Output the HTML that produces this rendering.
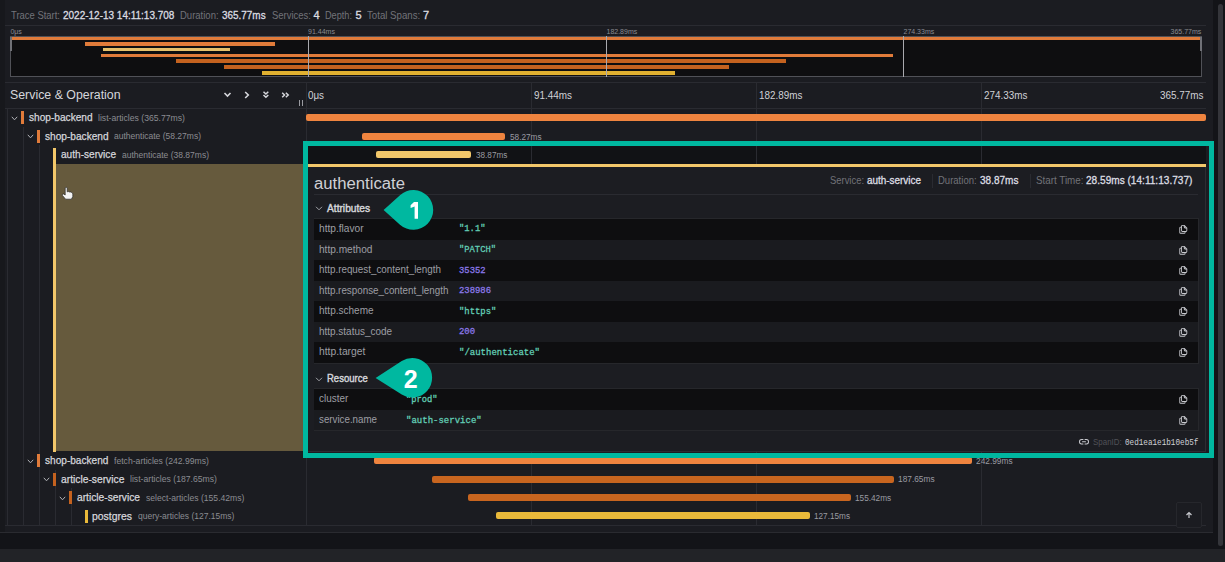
<!DOCTYPE html>
<html><head><meta charset="utf-8">
<style>
*{margin:0;padding:0;box-sizing:border-box}
html,body{width:1225px;height:562px;overflow:hidden;background:#131418;font-family:"Liberation Sans",sans-serif;color:#d0d1d6}
.a{position:absolute}
.t{position:absolute;white-space:nowrap;line-height:1}
.hl{position:absolute;height:1px;background:#2a2b31}
.vl{position:absolute;width:1px;background:#2a2b31}
.mm{position:absolute;height:3.8px}
.bar{position:absolute;height:7px;border-radius:2px}
.cb{position:absolute;width:3px;height:13px}
.chev{position:absolute;width:7px;height:5px}
.row{position:absolute;left:314px;width:884px;height:20.5px}
.copy{position:absolute;left:1179px;width:9px;height:10px}
</style></head><body>
<div class="a" style="left:0;top:0;width:1213px;height:533px;background:#1b1c21;border-bottom:1px solid #2a2b30"></div>
<div class="a" style="left:0;top:548.5px;width:1225px;height:14px;background:#222327"></div>
<div class="a" style="left:1218px;top:4px;width:5px;height:542px;border-radius:3px;background:#34353a"></div>

<div class="a" style="left:0;top:0;width:4.5px;height:532px;background:#17181c"></div>
<div class="hl" style="left:5px;top:25px;width:1201px"></div>

<!-- minimap -->
<div class="a" style="left:10px;top:36px;width:1192px;height:41px;background:#0e0e10;border:1px solid #505157"></div>
<div class="mm" style="left:12px;top:36.5px;width:1189px;background:#e07b3a"></div>
<div class="mm" style="left:84.6px;top:41.8px;width:190px;background:#e07b3a"></div>
<div class="mm" style="left:103px;top:47.6px;width:127px;background:#e5c06c"></div>
<div class="mm" style="left:100.6px;top:53.5px;width:792px;background:#e07b3a"></div>
<div class="mm" style="left:176.4px;top:59.3px;width:610px;background:#c4621f"></div>
<div class="mm" style="left:224px;top:65.1px;width:505px;background:#c4621f"></div>
<div class="mm" style="left:262px;top:71px;width:413px;background:#e0b030"></div>
<div class="a" style="left:308px;top:36px;width:1px;height:41px;background:#a9a9ae"></div>
<div class="a" style="left:606px;top:36px;width:1px;height:41px;background:#a9a9ae"></div>
<div class="a" style="left:903px;top:36px;width:1px;height:41px;background:#a9a9ae"></div>
<div class="a" style="left:10px;top:37px;width:2px;height:14px;background:#707177"></div>
<div class="a" style="left:1200px;top:37px;width:2px;height:14px;background:#707177"></div>

<!-- column header -->
<div class="hl" style="left:5px;top:82px;width:1201px"></div>
<div class="hl" style="left:5px;top:108px;width:1201px"></div>
<svg class="a" style="left:222px;top:90px" width="12" height="10" viewBox="0 0 12 10"><path d="M2.5 3 L5.5 6 L8.5 3" fill="none" stroke="#d6d7dc" stroke-width="1.6"/></svg>
<svg class="a" style="left:242px;top:90px" width="10" height="10" viewBox="0 0 10 10"><path d="M3.2 2 L6.3 5 L3.2 8" fill="none" stroke="#d6d7dc" stroke-width="1.6"/></svg>
<svg class="a" style="left:261px;top:89px" width="10" height="11" viewBox="0 0 10 11"><path d="M2.5 2.8 L4.9 5 L7.3 2.8 M2.5 6 L4.9 8.3 L7.3 6" fill="none" stroke="#d6d7dc" stroke-width="1.5"/></svg>
<svg class="a" style="left:280px;top:90px" width="11" height="10" viewBox="0 0 11 10"><path d="M2.2 2.8 L4.5 5 L2.2 7.2 M5.8 2.8 L8.2 5 L5.8 7.2" fill="none" stroke="#d6d7dc" stroke-width="1.5"/></svg>
<div class="a" style="left:299px;top:100px;width:1px;height:6px;background:#9a9ba1"></div>
<div class="a" style="left:302px;top:100px;width:1px;height:6px;background:#9a9ba1"></div>
<div class="vl" style="left:306px;top:82px;height:444px"></div>
<div class="vl" style="left:531px;top:82px;height:444px"></div>
<div class="vl" style="left:756px;top:82px;height:444px"></div>
<div class="vl" style="left:981px;top:82px;height:444px"></div>

<!-- indent guides -->
<div class="vl" style="left:7px;top:108px;height:418px"></div>
<div class="vl" style="left:23px;top:127px;height:399px"></div>
<div class="vl" style="left:39px;top:145px;height:381px"></div>
<div class="vl" style="left:55px;top:470px;height:56px"></div>
<div class="vl" style="left:71px;top:488px;height:38px"></div>
<div class="hl" style="left:5px;top:525px;width:1201px"></div>

<!-- row1 -->
<svg class="a chev" style="left:11px;top:115.5px" viewBox="0 0 7 5"><path d="M0.8 0.8 L3.5 3.8 L6.2 0.8" fill="none" stroke="#b0b1b6" stroke-width="1"/></svg>
<div class="cb" style="left:21px;top:111px;background:#e07b3a"></div>
<div class="bar" style="left:306px;top:114.2px;width:900px;background:#ef843f"></div>
<!-- row2 -->
<svg class="a chev" style="left:27px;top:134px" viewBox="0 0 7 5"><path d="M0.8 0.8 L3.5 3.8 L6.2 0.8" fill="none" stroke="#b0b1b6" stroke-width="1"/></svg>
<div class="cb" style="left:37px;top:130px;background:#e07b3a"></div>
<div class="bar" style="left:362px;top:132.7px;width:143px;background:#ef843f"></div>
<!-- row3 -->
<div class="a" style="left:53px;top:148px;width:3px;height:304px;background:#f2c76a"></div>
<div class="a" style="left:306px;top:145.5px;width:900px;height:18.5px;background:#111215"></div>
<div class="vl" style="left:531px;top:145.5px;height:18.5px"></div>
<div class="vl" style="left:756px;top:145.5px;height:18.5px"></div>
<div class="vl" style="left:981px;top:145.5px;height:18.5px"></div>
<div class="bar" style="left:376px;top:151.2px;width:95px;background:#f2c76a"></div>

<!-- detail left olive -->
<div class="a" style="left:56px;top:164px;width:250px;height:287px;background:#665a3d"></div>
<svg class="a" style="left:60px;top:186px" width="15" height="15" viewBox="0 0 15 15"><path d="M5.2 1.8 Q6.2 0.8 7.2 1.8 V5.8 Q8.5 5.2 9.5 6.0 Q10.8 5.6 11.8 6.6 Q12.8 6.8 12.8 8.2 V10.6 L11.4 13.2 H5.6 L2.4 9.4 Q1.8 8.0 3.4 7.9 L5.2 9.0 Z" fill="#f4f4f4" stroke="#2a2a2a" stroke-width="0.7"/></svg>
<!-- detail box -->
<div class="a" style="left:306px;top:164px;width:900px;height:287.5px;background:#1c1d22;border-right:1px solid #2c2d32;border-bottom:1px solid #2c2d32"></div>
<div class="a" style="left:306px;top:164px;width:900px;height:2.8px;background:#f2c76a"></div>
<div class="vl" style="left:932px;top:174px;height:14px"></div>
<div class="vl" style="left:1029.6px;top:174px;height:14px"></div>
<div class="hl" style="left:314px;top:194px;width:884px"></div>

<div class="a" style="left:313.5px;top:218px;width:885px;height:145.8px;border:1px solid #26272b"></div>
<div class="row" style="top:219.00px;height:20.55px;background:#0e0e10"></div>
<div class="row" style="top:239.55px;height:20.55px;background:#1a1b1f"></div>
<div class="row" style="top:260.10px;height:20.55px;background:#0e0e10"></div>
<div class="row" style="top:280.65px;height:20.55px;background:#1a1b1f"></div>
<div class="row" style="top:301.20px;height:20.55px;background:#0e0e10"></div>
<div class="row" style="top:321.75px;height:20.55px;background:#1a1b1f"></div>
<div class="row" style="top:342.30px;height:20.55px;background:#0e0e10"></div>
<svg class="a" style="left:315px;top:206px" width="8" height="5" viewBox="0 0 8 5"><path d="M1 0.8 L4 3.8 L7 0.8" fill="none" stroke="#a0a1a6" stroke-width="1"/></svg>

<div class="a" style="left:313.5px;top:388px;width:885px;height:43.1px;border:1px solid #26272b"></div>
<div class="row" style="top:389.00px;height:20.55px;background:#0e0e10"></div>
<div class="row" style="top:409.55px;height:20.55px;background:#1a1b1f"></div>
<svg class="a" style="left:315px;top:376.5px" width="8" height="5" viewBox="0 0 8 5"><path d="M1 0.8 L4 3.8 L7 0.8" fill="none" stroke="#a0a1a6" stroke-width="1"/></svg>
<svg class="a" style="left:1079px;top:439.4px" width="10" height="5.6" viewBox="2 7 20 10" preserveAspectRatio="none"><path d="M8,12a1,1,0,0,0,1,1h6a1,1,0,0,0,0-2H9A1,1,0,0,0,8,12Zm2,3H7A3,3,0,0,1,7,9h3a1,1,0,0,0,0-2H7A5,5,0,0,0,7,17h3a1,1,0,0,0,0-2Zm7-8H14a1,1,0,0,0,0,2h3a3,3,0,0,1,0,6H14a1,1,0,0,0,0,2h3A5,5,0,0,0,17,7Z" fill="#c8c9ce"/></svg>

<svg class="a" style="left:1177.8px;top:223.98px" width="10.6" height="10.6" viewBox="0 0 24 24"><path d="M21,8.94a1.31,1.31,0,0,0-.06-.27l0-.09a1.07,1.07,0,0,0-.19-.28h0l-6-6h0a1.07,1.07,0,0,0-.28-.19.32.32,0,0,0-.09,0A.88.88,0,0,0,14.05,2H10A3,3,0,0,0,7,5V6H6A3,3,0,0,0,3,9V19a3,3,0,0,0,3,3h8a3,3,0,0,0,3-3V18h1a3,3,0,0,0,3-3V9S21,9,21,8.94ZM15,5.41,17.59,8H16a1,1,0,0,1-1-1ZM15,19a1,1,0,0,1-1,1H6a1,1,0,0,1-1-1V9A1,1,0,0,1,6,8H7v7a3,3,0,0,0,3,3h5Zm4-4a1,1,0,0,1-1,1H10a1,1,0,0,1-1-1V5a1,1,0,0,1,1-1h3V7a3,3,0,0,0,3,3h3Z" fill="#c8c9ce"/></svg>
<svg class="a" style="left:1177.8px;top:244.53px" width="10.6" height="10.6" viewBox="0 0 24 24"><path d="M21,8.94a1.31,1.31,0,0,0-.06-.27l0-.09a1.07,1.07,0,0,0-.19-.28h0l-6-6h0a1.07,1.07,0,0,0-.28-.19.32.32,0,0,0-.09,0A.88.88,0,0,0,14.05,2H10A3,3,0,0,0,7,5V6H6A3,3,0,0,0,3,9V19a3,3,0,0,0,3,3h8a3,3,0,0,0,3-3V18h1a3,3,0,0,0,3-3V9S21,9,21,8.94ZM15,5.41,17.59,8H16a1,1,0,0,1-1-1ZM15,19a1,1,0,0,1-1,1H6a1,1,0,0,1-1-1V9A1,1,0,0,1,6,8H7v7a3,3,0,0,0,3,3h5Zm4-4a1,1,0,0,1-1,1H10a1,1,0,0,1-1-1V5a1,1,0,0,1,1-1h3V7a3,3,0,0,0,3,3h3Z" fill="#c8c9ce"/></svg>
<svg class="a" style="left:1177.8px;top:265.08px" width="10.6" height="10.6" viewBox="0 0 24 24"><path d="M21,8.94a1.31,1.31,0,0,0-.06-.27l0-.09a1.07,1.07,0,0,0-.19-.28h0l-6-6h0a1.07,1.07,0,0,0-.28-.19.32.32,0,0,0-.09,0A.88.88,0,0,0,14.05,2H10A3,3,0,0,0,7,5V6H6A3,3,0,0,0,3,9V19a3,3,0,0,0,3,3h8a3,3,0,0,0,3-3V18h1a3,3,0,0,0,3-3V9S21,9,21,8.94ZM15,5.41,17.59,8H16a1,1,0,0,1-1-1ZM15,19a1,1,0,0,1-1,1H6a1,1,0,0,1-1-1V9A1,1,0,0,1,6,8H7v7a3,3,0,0,0,3,3h5Zm4-4a1,1,0,0,1-1,1H10a1,1,0,0,1-1-1V5a1,1,0,0,1,1-1h3V7a3,3,0,0,0,3,3h3Z" fill="#c8c9ce"/></svg>
<svg class="a" style="left:1177.8px;top:285.63px" width="10.6" height="10.6" viewBox="0 0 24 24"><path d="M21,8.94a1.31,1.31,0,0,0-.06-.27l0-.09a1.07,1.07,0,0,0-.19-.28h0l-6-6h0a1.07,1.07,0,0,0-.28-.19.32.32,0,0,0-.09,0A.88.88,0,0,0,14.05,2H10A3,3,0,0,0,7,5V6H6A3,3,0,0,0,3,9V19a3,3,0,0,0,3,3h8a3,3,0,0,0,3-3V18h1a3,3,0,0,0,3-3V9S21,9,21,8.94ZM15,5.41,17.59,8H16a1,1,0,0,1-1-1ZM15,19a1,1,0,0,1-1,1H6a1,1,0,0,1-1-1V9A1,1,0,0,1,6,8H7v7a3,3,0,0,0,3,3h5Zm4-4a1,1,0,0,1-1,1H10a1,1,0,0,1-1-1V5a1,1,0,0,1,1-1h3V7a3,3,0,0,0,3,3h3Z" fill="#c8c9ce"/></svg>
<svg class="a" style="left:1177.8px;top:306.18px" width="10.6" height="10.6" viewBox="0 0 24 24"><path d="M21,8.94a1.31,1.31,0,0,0-.06-.27l0-.09a1.07,1.07,0,0,0-.19-.28h0l-6-6h0a1.07,1.07,0,0,0-.28-.19.32.32,0,0,0-.09,0A.88.88,0,0,0,14.05,2H10A3,3,0,0,0,7,5V6H6A3,3,0,0,0,3,9V19a3,3,0,0,0,3,3h8a3,3,0,0,0,3-3V18h1a3,3,0,0,0,3-3V9S21,9,21,8.94ZM15,5.41,17.59,8H16a1,1,0,0,1-1-1ZM15,19a1,1,0,0,1-1,1H6a1,1,0,0,1-1-1V9A1,1,0,0,1,6,8H7v7a3,3,0,0,0,3,3h5Zm4-4a1,1,0,0,1-1,1H10a1,1,0,0,1-1-1V5a1,1,0,0,1,1-1h3V7a3,3,0,0,0,3,3h3Z" fill="#c8c9ce"/></svg>
<svg class="a" style="left:1177.8px;top:326.73px" width="10.6" height="10.6" viewBox="0 0 24 24"><path d="M21,8.94a1.31,1.31,0,0,0-.06-.27l0-.09a1.07,1.07,0,0,0-.19-.28h0l-6-6h0a1.07,1.07,0,0,0-.28-.19.32.32,0,0,0-.09,0A.88.88,0,0,0,14.05,2H10A3,3,0,0,0,7,5V6H6A3,3,0,0,0,3,9V19a3,3,0,0,0,3,3h8a3,3,0,0,0,3-3V18h1a3,3,0,0,0,3-3V9S21,9,21,8.94ZM15,5.41,17.59,8H16a1,1,0,0,1-1-1ZM15,19a1,1,0,0,1-1,1H6a1,1,0,0,1-1-1V9A1,1,0,0,1,6,8H7v7a3,3,0,0,0,3,3h5Zm4-4a1,1,0,0,1-1,1H10a1,1,0,0,1-1-1V5a1,1,0,0,1,1-1h3V7a3,3,0,0,0,3,3h3Z" fill="#c8c9ce"/></svg>
<svg class="a" style="left:1177.8px;top:347.28px" width="10.6" height="10.6" viewBox="0 0 24 24"><path d="M21,8.94a1.31,1.31,0,0,0-.06-.27l0-.09a1.07,1.07,0,0,0-.19-.28h0l-6-6h0a1.07,1.07,0,0,0-.28-.19.32.32,0,0,0-.09,0A.88.88,0,0,0,14.05,2H10A3,3,0,0,0,7,5V6H6A3,3,0,0,0,3,9V19a3,3,0,0,0,3,3h8a3,3,0,0,0,3-3V18h1a3,3,0,0,0,3-3V9S21,9,21,8.94ZM15,5.41,17.59,8H16a1,1,0,0,1-1-1ZM15,19a1,1,0,0,1-1,1H6a1,1,0,0,1-1-1V9A1,1,0,0,1,6,8H7v7a3,3,0,0,0,3,3h5Zm4-4a1,1,0,0,1-1,1H10a1,1,0,0,1-1-1V5a1,1,0,0,1,1-1h3V7a3,3,0,0,0,3,3h3Z" fill="#c8c9ce"/></svg>
<svg class="a" style="left:1177.8px;top:393.98px" width="10.6" height="10.6" viewBox="0 0 24 24"><path d="M21,8.94a1.31,1.31,0,0,0-.06-.27l0-.09a1.07,1.07,0,0,0-.19-.28h0l-6-6h0a1.07,1.07,0,0,0-.28-.19.32.32,0,0,0-.09,0A.88.88,0,0,0,14.05,2H10A3,3,0,0,0,7,5V6H6A3,3,0,0,0,3,9V19a3,3,0,0,0,3,3h8a3,3,0,0,0,3-3V18h1a3,3,0,0,0,3-3V9S21,9,21,8.94ZM15,5.41,17.59,8H16a1,1,0,0,1-1-1ZM15,19a1,1,0,0,1-1,1H6a1,1,0,0,1-1-1V9A1,1,0,0,1,6,8H7v7a3,3,0,0,0,3,3h5Zm4-4a1,1,0,0,1-1,1H10a1,1,0,0,1-1-1V5a1,1,0,0,1,1-1h3V7a3,3,0,0,0,3,3h3Z" fill="#c8c9ce"/></svg>
<svg class="a" style="left:1177.8px;top:414.53px" width="10.6" height="10.6" viewBox="0 0 24 24"><path d="M21,8.94a1.31,1.31,0,0,0-.06-.27l0-.09a1.07,1.07,0,0,0-.19-.28h0l-6-6h0a1.07,1.07,0,0,0-.28-.19.32.32,0,0,0-.09,0A.88.88,0,0,0,14.05,2H10A3,3,0,0,0,7,5V6H6A3,3,0,0,0,3,9V19a3,3,0,0,0,3,3h8a3,3,0,0,0,3-3V18h1a3,3,0,0,0,3-3V9S21,9,21,8.94ZM15,5.41,17.59,8H16a1,1,0,0,1-1-1ZM15,19a1,1,0,0,1-1,1H6a1,1,0,0,1-1-1V9A1,1,0,0,1,6,8H7v7a3,3,0,0,0,3,3h5Zm4-4a1,1,0,0,1-1,1H10a1,1,0,0,1-1-1V5a1,1,0,0,1,1-1h3V7a3,3,0,0,0,3,3h3Z" fill="#c8c9ce"/></svg>
<!-- rows 4-7 -->
<svg class="a chev" style="left:27px;top:458.5px" viewBox="0 0 7 5"><path d="M0.8 0.8 L3.5 3.8 L6.2 0.8" fill="none" stroke="#b0b1b6" stroke-width="1"/></svg>
<div class="cb" style="left:37px;top:454px;background:#e07b3a"></div>
<div class="bar" style="left:374px;top:457.2px;width:598px;background:#ef843f"></div>
<svg class="a chev" style="left:43px;top:477px" viewBox="0 0 7 5"><path d="M0.8 0.8 L3.5 3.8 L6.2 0.8" fill="none" stroke="#b0b1b6" stroke-width="1"/></svg>
<div class="cb" style="left:53px;top:472.5px;background:#c4621f"></div>
<div class="bar" style="left:432px;top:475.7px;width:462px;background:#c8651f"></div>
<svg class="a chev" style="left:59px;top:495.5px" viewBox="0 0 7 5"><path d="M0.8 0.8 L3.5 3.8 L6.2 0.8" fill="none" stroke="#b0b1b6" stroke-width="1"/></svg>
<div class="cb" style="left:69px;top:491px;background:#c4621f"></div>
<div class="bar" style="left:468px;top:494.2px;width:383px;background:#c8651f"></div>
<div class="cb" style="left:85px;top:509.5px;background:#e9b93a"></div>
<div class="bar" style="left:496px;top:512.2px;width:313.5px;background:#e9b93a"></div>

<!-- scroll-top button -->
<div class="a" style="left:1176px;top:502px;width:26px;height:26px;border:1px solid #26272c;border-radius:2px;background:#1b1c21"></div>
<svg class="a" style="left:1185px;top:511px" width="8" height="8" viewBox="0 0 8 8"><path d="M4 7 V1.5 M1.5 4 L4 1.5 L6.5 4" fill="none" stroke="#c8c9ce" stroke-width="1.2"/></svg>

<div class="t" style="top:9.69px;font-size:11px;color:#727379;transform:scaleX(0.8587);left:11px;transform-origin:0 0;">Trace Start:</div>
<div class="t" style="top:9.69px;font-size:11px;color:#dcdde2;-webkit-text-stroke:0.3px #dcdde2;transform:scaleX(0.9075);left:63px;transform-origin:0 0;">2022-12-13 14:11:13.708</div>
<div class="t" style="top:9.69px;font-size:11px;color:#727379;transform:scaleX(0.8647);left:180.4px;transform-origin:0 0;">Duration:</div>
<div class="t" style="top:9.69px;font-size:11px;color:#dcdde2;-webkit-text-stroke:0.3px #dcdde2;transform:scaleX(0.9025);left:222.4px;transform-origin:0 0;">365.77ms</div>
<div class="t" style="top:9.69px;font-size:11px;color:#727379;transform:scaleX(0.8619);left:272px;transform-origin:0 0;">Services:</div>
<div class="t" style="top:9.69px;font-size:11px;color:#dcdde2;-webkit-text-stroke:0.3px #dcdde2;left:313.6px;">4</div>
<div class="t" style="top:9.69px;font-size:11px;color:#727379;transform:scaleX(0.8328);left:325px;transform-origin:0 0;">Depth:</div>
<div class="t" style="top:9.69px;font-size:11px;color:#dcdde2;-webkit-text-stroke:0.3px #dcdde2;left:355.6px;">5</div>
<div class="t" style="top:9.69px;font-size:11px;color:#727379;transform:scaleX(0.8787);left:367px;transform-origin:0 0;">Total Spans:</div>
<div class="t" style="top:9.69px;font-size:11px;color:#dcdde2;-webkit-text-stroke:0.3px #dcdde2;left:422.9px;">7</div>
<div class="t" style="top:28.07px;font-size:7px;color:#8a8b91;left:10.4px;">0μs</div>
<div class="t" style="top:28.07px;font-size:7px;color:#8a8b91;transform:scaleX(1.0052);left:308px;transform-origin:0 0;">91.44ms</div>
<div class="t" style="top:28.07px;font-size:7px;color:#8a8b91;left:606.5px;">182.89ms</div>
<div class="t" style="top:28.07px;font-size:7px;color:#8a8b91;left:903.5px;">274.33ms</div>
<div class="t" style="top:28.07px;font-size:7px;color:#8a8b91;right:23.70px;">365.77ms</div>
<div class="t" style="top:89.42px;font-size:12.5px;color:#d6d7dc;transform:scaleX(0.9887);left:10.4px;transform-origin:0 0;">Service &amp; Operation</div>
<div class="t" style="top:91.28px;font-size:10.3px;color:#d0d1d6;transform:scaleX(0.9517);left:308px;transform-origin:0 0;">0μs</div>
<div class="t" style="top:91.28px;font-size:10.3px;color:#d0d1d6;transform:scaleX(0.9620);left:533.5px;transform-origin:0 0;">91.44ms</div>
<div class="t" style="top:91.28px;font-size:10.3px;color:#d0d1d6;transform:scaleX(0.9594);left:758.6px;transform-origin:0 0;">182.89ms</div>
<div class="t" style="top:91.28px;font-size:10.3px;color:#d0d1d6;transform:scaleX(0.9594);left:984px;transform-origin:0 0;">274.33ms</div>
<div class="t" style="top:91.28px;font-size:10.3px;color:#d0d1d6;transform:scaleX(0.9594);left:1160.4px;transform-origin:0 0;">365.77ms</div>
<div class="t" style="top:112.49px;font-size:11px;color:#d6d7dc;-webkit-text-stroke:0.25px #d6d7dc;transform:scaleX(0.9203);left:29px;transform-origin:0 0;">shop-backend</div>
<div class="t" style="top:113.93px;font-size:9.3px;color:#8b8c92;transform:scaleX(0.9303);left:98px;transform-origin:0 0;">list-articles (365.77ms)</div>
<div class="t" style="top:130.99px;font-size:11px;color:#d6d7dc;-webkit-text-stroke:0.25px #d6d7dc;transform:scaleX(0.9203);left:45px;transform-origin:0 0;">shop-backend</div>
<div class="t" style="top:132.43px;font-size:9.3px;color:#8b8c92;transform:scaleX(0.9149);left:114px;transform-origin:0 0;">authenticate (58.27ms)</div>
<div class="t" style="top:149.49px;font-size:11px;color:#d6d7dc;-webkit-text-stroke:0.25px #d6d7dc;transform:scaleX(0.9179);left:61px;transform-origin:0 0;">auth-service</div>
<div class="t" style="top:150.93px;font-size:9.3px;color:#8b8c92;transform:scaleX(0.9149);left:122px;transform-origin:0 0;">authenticate (38.87ms)</div>
<div class="t" style="top:455.29px;font-size:11px;color:#d6d7dc;-webkit-text-stroke:0.25px #d6d7dc;transform:scaleX(0.9174);left:45px;transform-origin:0 0;">shop-backend</div>
<div class="t" style="top:456.73px;font-size:9.3px;color:#8b8c92;transform:scaleX(0.9285);left:114px;transform-origin:0 0;">fetch-articles (242.99ms)</div>
<div class="t" style="top:473.79px;font-size:11px;color:#d6d7dc;-webkit-text-stroke:0.25px #d6d7dc;transform:scaleX(0.9343);left:61px;transform-origin:0 0;">article-service</div>
<div class="t" style="top:475.23px;font-size:9.3px;color:#8b8c92;transform:scaleX(0.9303);left:130px;transform-origin:0 0;">list-articles (187.65ms)</div>
<div class="t" style="top:492.29px;font-size:11px;color:#d6d7dc;-webkit-text-stroke:0.25px #d6d7dc;transform:scaleX(0.9284);left:77px;transform-origin:0 0;">article-service</div>
<div class="t" style="top:493.73px;font-size:9.3px;color:#8b8c92;transform:scaleX(0.9245);left:145.7px;transform-origin:0 0;">select-articles (155.42ms)</div>
<div class="t" style="top:510.79px;font-size:11px;color:#d6d7dc;-webkit-text-stroke:0.25px #d6d7dc;transform:scaleX(0.9478);left:92px;transform-origin:0 0;">postgres</div>
<div class="t" style="top:512.23px;font-size:9.3px;color:#8b8c92;transform:scaleX(0.9146);left:137.6px;transform-origin:0 0;">query-articles (127.15ms)</div>
<div class="t" style="top:132.80px;font-size:8.5px;color:#9a9ba1;transform:scaleX(0.9690);left:510px;transform-origin:0 0;">58.27ms</div>
<div class="t" style="top:151.00px;font-size:8.5px;color:#9a9ba1;transform:scaleX(0.9598);left:476px;transform-origin:0 0;">38.87ms</div>
<div class="t" style="top:456.80px;font-size:8.5px;color:#9a9ba1;transform:scaleX(0.9801);left:976.4px;transform-origin:0 0;">242.99ms</div>
<div class="t" style="top:475.00px;font-size:8.5px;color:#9a9ba1;transform:scaleX(0.9801);left:898.4px;transform-origin:0 0;">187.65ms</div>
<div class="t" style="top:493.80px;font-size:8.5px;color:#9a9ba1;transform:scaleX(0.9694);left:855.4px;transform-origin:0 0;">155.42ms</div>
<div class="t" style="top:512.20px;font-size:8.5px;color:#9a9ba1;transform:scaleX(0.9640);left:814px;transform-origin:0 0;">127.15ms</div>
<div class="t" style="top:175.73px;font-size:15.8px;color:#cfd0d5;transform:scaleX(1.0572);left:314px;transform-origin:0 0;">authenticate</div>
<div class="t" style="top:176.28px;font-size:10.3px;color:#727379;transform:scaleX(0.9139);left:830px;transform-origin:0 0;">Service:</div>
<div class="t" style="top:176.28px;font-size:10.3px;color:#dcdde2;-webkit-text-stroke:0.3px #dcdde2;transform:scaleX(0.9627);left:867px;transform-origin:0 0;">auth-service</div>
<div class="t" style="top:176.28px;font-size:10.3px;color:#727379;transform:scaleX(0.9239);left:938.4px;transform-origin:0 0;">Duration:</div>
<div class="t" style="top:176.28px;font-size:10.3px;color:#dcdde2;-webkit-text-stroke:0.3px #dcdde2;transform:scaleX(0.9722);left:980px;transform-origin:0 0;">38.87ms</div>
<div class="t" style="top:176.28px;font-size:10.3px;color:#727379;transform:scaleX(0.9522);left:1035.6px;transform-origin:0 0;">Start Time:</div>
<div class="t" style="top:176.28px;font-size:10.3px;color:#dcdde2;-webkit-text-stroke:0.3px #dcdde2;transform:scaleX(0.9799);left:1086px;transform-origin:0 0;">28.59ms (14:11:13.737)</div>
<div class="t" style="top:203.88px;font-size:10.3px;color:#d6d7dc;-webkit-text-stroke:0.4px #d6d7dc;transform:scaleX(0.9908);left:326.9px;transform-origin:0 0;">Attributes</div>
<div class="t" style="top:374.48px;font-size:10.3px;color:#d6d7dc;-webkit-text-stroke:0.4px #d6d7dc;transform:scaleX(0.9234);left:326.9px;transform-origin:0 0;">Resource</div>
<div class="t" style="top:224.08px;font-size:10.3px;color:#9d9ea4;transform:scaleX(0.9863);left:319px;transform-origin:0 0;">http.flavor</div>
<div class="t" style="top:224.44px;font-size:9.6px;color:#62cdb5;-webkit-text-stroke:0.3px #62cdb5;font-family:'Liberation Mono',monospace;transform:scaleX(0.9202);left:459px;transform-origin:0 0;">"1.1"</div>
<div class="t" style="top:244.63px;font-size:10.3px;color:#9d9ea4;transform:scaleX(0.9818);left:319px;transform-origin:0 0;">http.method</div>
<div class="t" style="top:244.99px;font-size:9.6px;color:#62cdb5;-webkit-text-stroke:0.3px #62cdb5;font-family:'Liberation Mono',monospace;transform:scaleX(0.9178);left:459px;transform-origin:0 0;">"PATCH"</div>
<div class="t" style="top:265.18px;font-size:10.3px;color:#9d9ea4;transform:scaleX(0.9556);left:319px;transform-origin:0 0;">http.request_content_length</div>
<div class="t" style="top:265.54px;font-size:9.6px;color:#8a78e8;-webkit-text-stroke:0.3px #8a78e8;font-family:'Liberation Mono',monospace;transform:scaleX(0.9237);left:459px;transform-origin:0 0;">35352</div>
<div class="t" style="top:285.73px;font-size:10.3px;color:#9d9ea4;transform:scaleX(0.9537);left:319px;transform-origin:0 0;">http.response_content_length</div>
<div class="t" style="top:286.09px;font-size:9.6px;color:#8a78e8;-webkit-text-stroke:0.3px #8a78e8;font-family:'Liberation Mono',monospace;transform:scaleX(0.9263);left:459px;transform-origin:0 0;">238986</div>
<div class="t" style="top:306.28px;font-size:10.3px;color:#9d9ea4;transform:scaleX(0.9734);left:319px;transform-origin:0 0;">http.scheme</div>
<div class="t" style="top:306.64px;font-size:9.6px;color:#62cdb5;-webkit-text-stroke:0.3px #62cdb5;font-family:'Liberation Mono',monospace;transform:scaleX(0.9278);left:459px;transform-origin:0 0;">"https"</div>
<div class="t" style="top:326.83px;font-size:10.3px;color:#9d9ea4;transform:scaleX(0.9661);left:319px;transform-origin:0 0;">http.status_code</div>
<div class="t" style="top:327.19px;font-size:9.6px;color:#8a78e8;-webkit-text-stroke:0.3px #8a78e8;font-family:'Liberation Mono',monospace;transform:scaleX(0.9259);left:459px;transform-origin:0 0;">200</div>
<div class="t" style="top:347.38px;font-size:10.3px;color:#9d9ea4;left:319px;">http.target</div>
<div class="t" style="top:347.74px;font-size:9.6px;color:#62cdb5;-webkit-text-stroke:0.3px #62cdb5;font-family:'Liberation Mono',monospace;transform:scaleX(0.9379);left:459px;transform-origin:0 0;">"/authenticate"</div>
<div class="t" style="top:394.48px;font-size:10.3px;color:#9d9ea4;transform:scaleX(0.9661);left:319px;transform-origin:0 0;">cluster</div>
<div class="t" style="top:395.44px;font-size:9.6px;color:#62cdb5;-webkit-text-stroke:0.3px #62cdb5;font-family:'Liberation Mono',monospace;transform:scaleX(0.9118);left:405.5px;transform-origin:0 0;">"prod"</div>
<div class="t" style="top:415.03px;font-size:10.3px;color:#9d9ea4;transform:scaleX(0.9472);left:319px;transform-origin:0 0;">service.name</div>
<div class="t" style="top:415.99px;font-size:9.6px;color:#62cdb5;-webkit-text-stroke:0.3px #62cdb5;font-family:'Liberation Mono',monospace;transform:scaleX(0.9391);left:405.5px;transform-origin:0 0;">"auth-service"</div>
<div class="t" style="top:437.78px;font-size:9px;color:#505157;transform:scaleX(0.8822);left:1093px;transform-origin:0 0;">SpanID:</div>
<div class="t" style="top:438.50px;font-size:9px;color:#d0d1d6;font-family:'Liberation Mono',monospace;transform:scaleX(0.8493);left:1124.6px;transform-origin:0 0;">0ed1ea1e1b10eb5f</div>

<!-- callouts -->
<svg class="a" style="left:373px;top:183px" width="64" height="52" viewBox="0 0 64 52"><path d="M10.6 26.9 L26.97 12.13 A19.9 19.9 0 1 1 26.97 41.67 Z" fill="#00b8a0"/><path d="M41.6 19.1 H45.0 V35.75 H41.6 V23.6 L37.6 25.0 V22.2 L41.0 19.1 Z" fill="#fff"/></svg>
<svg class="a" style="left:365px;top:350px" width="72" height="52" viewBox="0 0 72 52"><path d="M10.6 27.9 L36.74 11.1 A19.75 19.75 0 1 1 36.74 44.4 Z" fill="#00b8a0"/><text x="45.8" y="37.7" font-family="Liberation Sans" font-weight="bold" font-size="25" fill="#fff" text-anchor="middle">2</text></svg>

<!-- teal annotation box -->
<div class="a" style="left:303px;top:141px;width:911px;height:317px;border:5px solid #00b8a0"></div>
</body></html>
